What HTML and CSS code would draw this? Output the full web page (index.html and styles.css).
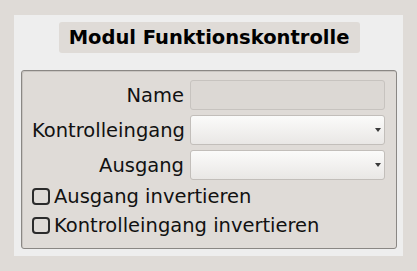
FILE: index.html
```html
<!DOCTYPE html>
<html>
<head>
<meta charset="utf-8">
<link rel="stylesheet" href="styles.css">
</head>
<body>
<div class="panel">
  <div class="title">Modul Funktionskontrolle</div>
  <div class="group">
    <div class="form">
      <label class="lbl">Name</label>
      <div class="entry"></div>
      <label class="lbl">Kontrolleingang</label>
      <div class="combo"><span class="arrow"></span></div>
      <label class="lbl">Ausgang</label>
      <div class="combo"><span class="arrow"></span></div>
    </div>
    <div class="check"><span class="box"></span><span>Ausgang invertieren</span></div>
    <div class="check"><span class="box"></span><span>Kontrolleingang invertieren</span></div>
  </div>
</div>
</body>
</html>
```
FILE: styles.css
```css
html, body {
  margin: 0;
  padding: 0;
  background: #dfdbd7;
  font-family: "DejaVu Sans", sans-serif;
  color: #111;
}
body {
  padding: 15px 14px;
  width: 417px;
  height: 271px;
  box-sizing: border-box;
}
.panel {
  width: 389px;
  height: 241px;
  background: #eeeeee;
  box-sizing: border-box;
  padding: 7px 6px 0 7px;
  display: flex;
  flex-direction: column;
  align-items: center;
}
.title {
  width: 301px;
  height: 31px;
  background: #dfdbd7;
  border-radius: 3px;
  font-weight: bold;
  font-size: 19.5px;
  color: #000;
  display: flex;
  align-items: center;
  justify-content: center;
}
.group {
  align-self: stretch;
  margin-top: 17px;
  height: 179px;
  box-sizing: border-box;
  border: 1px solid #8a8784;
  box-shadow: inset 1px 1px 0 #c9c5c1;
  border-radius: 3px;
  background: #dfdbd7;
  padding: 9px 11px 0 10px;
}
.form {
  display: grid;
  grid-template-columns: 152px 195px;
  column-gap: 6px;
  row-gap: 5px;
  align-items: center;
  margin-bottom: 2px;
}
.lbl {
  text-align: right;
  font-size: 19.5px;
  white-space: nowrap;
}
.entry {
  height: 30px;
  box-sizing: border-box;
  border: 1px solid #c7c3bf;
  border-radius: 3px;
  background: #dcd8d4;
}
.combo {
  height: 30px;
  box-sizing: border-box;
  border: 1px solid #c2beba;
  border-radius: 3px;
  background: linear-gradient(#fbfbfa, #e9e7e5);
  display: flex;
  align-items: center;
  justify-content: flex-end;
  padding-right: 3px;
}
.arrow {
  width: 0;
  height: 0;
  border-left: 3px solid transparent;
  border-right: 3px solid transparent;
  border-top: 4px solid #3a3a3a;
}
.check {
  display: flex;
  align-items: center;
  font-size: 19.5px;
  height: 29px;
  white-space: nowrap;
}
.box {
  width: 18px;
  height: 17px;
  box-sizing: border-box;
  border: 2px solid #2b2b2b;
  border-radius: 4px;
  margin-right: 4px;
}
```
